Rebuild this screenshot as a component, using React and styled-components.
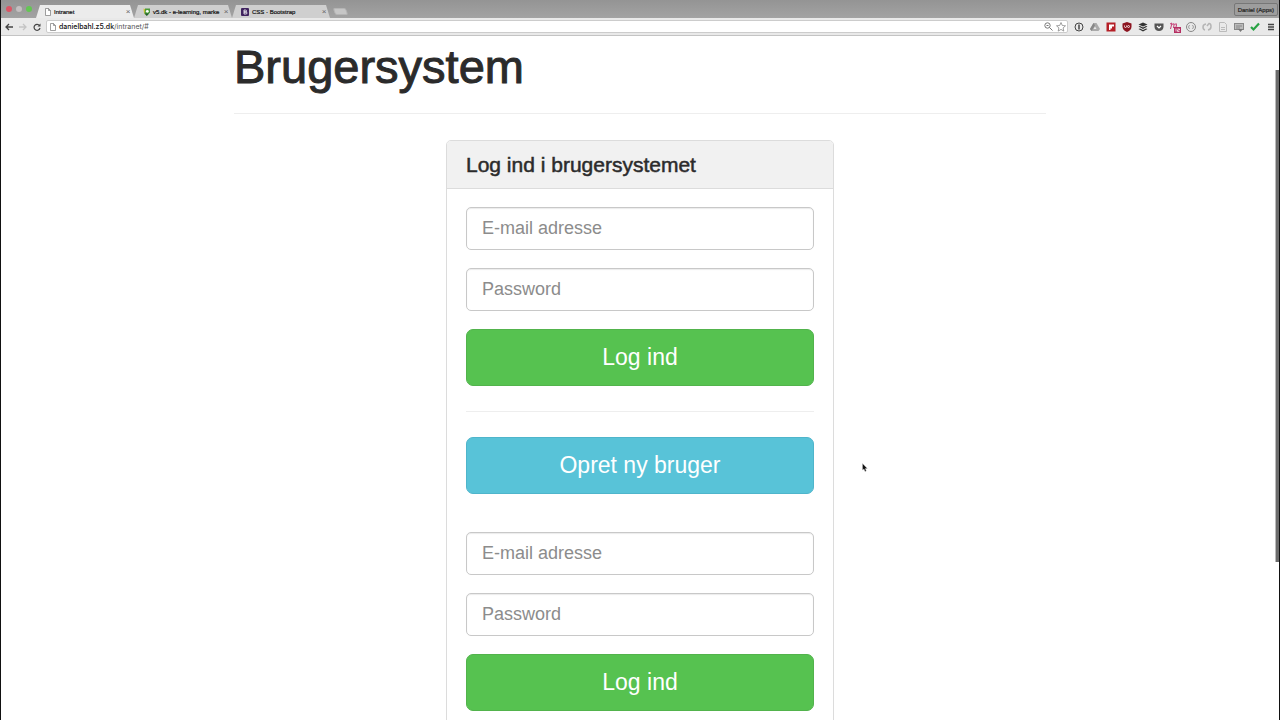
import React from 'react';
import styled, { createGlobalStyle } from 'styled-components';

const GlobalStyle = createGlobalStyle`
  * {
    box-sizing: border-box;
  }
  body {
    margin: 0;
    background: #fff;
    color: #2b2b2b;
    font-family: "Liberation Sans", Arial, sans-serif;
  }
`;

const Window = styled.div`
  height: 100vh;
  display: flex;
  flex-direction: column;
  overflow: hidden;
  border-left: 1px solid #111;
  border-right: 1px solid #111;
  background: #fff;
`;

const TabStrip = styled.div`
  height: 18px;
  flex: none;
  display: flex;
  align-items: flex-end;
  padding-left: 5px;
  background: linear-gradient(#949494, #a3a3a3);
`;

const Lights = styled.div`
  display: flex;
  gap: 4px;
  align-self: center;
  margin-right: 4px;
`;

const Light = styled.span`
  width: 6px;
  height: 6px;
  border-radius: 50%;
  background: ${props => props.$color};
`;

const Tab = styled.div`
  width: 98px;
  height: 13px;
  display: flex;
  align-items: center;
  gap: 3px;
  padding: 0 3px 0 9px;
  font-size: 6px;
  color: #111;
  background: ${props => (props.$active ? '#ececec' : '#cfcfcf')};
  clip-path: polygon(4px 0, calc(100% - 4px) 0, 100% 100%, 0 100%);

  & > svg {
    flex: none;
  }
`;

const TabTitle = styled.span`
  flex: 1;
  white-space: nowrap;
  line-height: 8px;
  -webkit-text-stroke: 0.2px;
`;

const TabClose = styled.button`
  width: 6px;
  height: 8px;
  padding: 0;
  border: 0;
  background: none;
  color: #666;
  font-size: 8px;
  line-height: 8px;
`;

const NewTab = styled.button`
  width: 13px;
  height: 7px;
  margin: 0 0 3px 4px;
  padding: 0;
  border: 1px solid #b5b5b5;
  border-radius: 2px;
  background: #c6c6c6;
  transform: skewX(20deg);
`;

const Profile = styled.button`
  height: 13px;
  margin: 0 1px 2px auto;
  padding: 0 3px;
  border: 1px solid #777;
  border-radius: 2px;
  background: #9d9d9d;
  color: #222;
  font: 6px "Liberation Sans", Arial, sans-serif;
  -webkit-text-stroke: 0.2px;
`;

const Toolbar = styled.div`
  height: 18px;
  flex: none;
  display: flex;
  align-items: center;
  padding: 0 2px 0 1px;
  background: #e9e9e9;
  border-bottom: 1px solid #c4c4c4;
`;

const NavButton = styled.button`
  width: 14px;
  height: 12px;
  display: flex;
  align-items: center;
  justify-content: center;
  padding: 0;
  border: 0;
  background: none;
`;

const AddressBar = styled.div`
  flex: 1;
  height: 13px;
  display: flex;
  align-items: center;
  gap: 3px;
  margin-left: 2px;
  padding: 0 1px 0 3px;
  border: 1px solid #ccc;
  border-radius: 2px;
  background: #fff;
`;

const Url = styled.div`
  flex: 1;
  font-family: Inter, "Liberation Sans", sans-serif;
  font-size: 7px;
  line-height: 9px;
  color: #555;

  & > strong {
    color: #111;
    font-weight: 500;
  }
`;

const Extensions = styled.div`
  display: flex;
  gap: 4px;
  margin-left: 5px;
`;

const Extension = styled.button`
  width: 12px;
  height: 12px;
  display: flex;
  align-items: center;
  justify-content: center;
  padding: 0;
  border: 0;
  background: none;
`;

const Viewport = styled.main`
  flex: 1;
  min-height: 0;
  position: relative;
  overflow: hidden;
`;

const Scrollbar = styled.div`
  position: absolute;
  top: 34px;
  right: 0;
  width: 4px;
  height: 72%;
  background: #6b6b6b;
  border-left: 1px solid #bbb;
`;

const Cursor = styled.svg`
  position: absolute;
  left: 861px;
  top: 427px;
`;

const Container = styled.div`
  max-width: 812px;
  margin: 0 auto;
`;

const PageHeader = styled.header`
  padding: 3px 0 18px;
  border-bottom: 1px solid #eee;
  margin-bottom: 26px;
`;

const Title = styled.h1`
  margin: 0;
  font-size: 47px;
  line-height: 56px;
  font-weight: normal;
  -webkit-text-stroke: 1px;
`;

const Panel = styled.section`
  max-width: 388px;
  margin: 0 auto;
  border: 1px solid #dcdcdc;
  border-radius: 5px;
`;

const PanelHeading = styled.div`
  padding: 12px 19px;
  background: #f1f1f1;
  border-bottom: 1px solid #dcdcdc;
  border-radius: 4px 4px 0 0;
`;

const PanelTitle = styled.h3`
  margin: 0;
  font-size: 21px;
  line-height: 23px;
  font-weight: normal;
  -webkit-text-stroke: 0.5px;
`;

const PanelBody = styled.div`
  padding: 18px 19px;
`;

const Form = styled.form`
  display: flex;
  flex-direction: column;
  gap: 18px;
`;

const Input = styled.input`
  width: 100%;
  height: 43px;
  padding: 0 15px;
  border: 1px solid #c8c8c8;
  border-radius: 5px;
  background: #fff;
  box-shadow: inset 0 1px 1px rgba(0, 0, 0, 0.08);
  color: #555;
  font: 18px "Liberation Sans", Arial, sans-serif;

  &::placeholder {
    color: #8c8c8c;
    opacity: 1;
  }
`;

const Button = styled.button`
  width: 100%;
  height: 57px;
  padding: 0;
  border: 1px solid ${props => (props.$info ? '#4fb5cb' : '#52b34c')};
  border-radius: 7px;
  background: ${props => (props.$info ? '#58c3d8' : '#56c250')};
  color: #fff;
  font: 23px "Liberation Sans", Arial, sans-serif;
`;

const Divider = styled.hr`
  margin: 25px 0;
  border: 0;
  border-top: 1px solid #eee;
`;

const SignUp = styled.div`
  margin-bottom: 38px;
`;

const PageIcon = () => (
  <svg width="6" height="8" viewBox="0 0 6 8" fill="#fff" stroke="#777" strokeWidth="0.7">
    <path d="M0.5 0.5h3l2 2v5h-5zM3.5 0.5v2h2" />
  </svg>
);

const LogoIcon = () => (
  <svg width="7" height="8" viewBox="0 0 7 8">
    <path d="M0.500 0.500L4 2 3 7 1 5z" fill="#d9c62d" />
    <path d="M2 0.500h5v4L4.500 7.500 1.500 6z" fill="#4c9a3c" />
    <circle cx="4.300" cy="3.300" r="1.400" fill="#fff" />
    <path d="M2 5.500h4L3.500 8z" fill="#225a2b" />
  </svg>
);

const BootstrapIcon = () => (
  <svg width="8" height="8" viewBox="0 0 8 8">
    <rect width="8" height="8" rx="1" fill="#40245f" />
    <path d="M3 2h1.500q1 0 1 1t-1 1H3zM3 4h2q1 0 1 1t-1 1H3z" fill="none" stroke="#fff" strokeWidth="0.8" />
  </svg>
);

const tabs = [
  { title: 'Intranet', Icon: PageIcon, active: true },
  { title: 'v5.dk - e-learning, marke', Icon: LogoIcon },
  { title: 'CSS · Bootstrap', Icon: BootstrapIcon }
];

const extensions = [
  {
    name: '1Password',
    icon: (
      <g fill="none" stroke="#444">
        <circle cx="6" cy="6" r="4" />
        <path d="M6 3.500v5" strokeWidth="1.500" />
      </g>
    )
  },
  {
    name: 'Drive',
    icon: (
      <g>
        <path d="M4.500 2h3L11 8 9.500 10h-7L1 8z" fill="#aaa" />
        <path d="M4.500 2L1 8l1.500 2L6 4.500z" fill="#888" />
        <path d="M6 5.500L4.500 8h3z" fill="#e9e9e9" />
      </g>
    )
  },
  {
    name: 'Flipboard',
    icon: (
      <g>
        <rect x="1.500" y="1.500" width="9" height="9" fill="#b51f27" />
        <path d="M4 3.500h5v2H7v2H5.500V9H4z" fill="#fff" />
      </g>
    )
  },
  {
    name: 'uBlock',
    icon: (
      <g>
        <path d="M6 1l4.500 1.500v3Q10.500 9 6 11 1.500 9 1.500 5.500v-3z" fill="#8c1420" />
        <path d="M3.500 4.500v1q0 1 1 1t1-1v-1" fill="none" stroke="#fff" strokeWidth="0.8" />
        <circle cx="7.500" cy="5.500" r="1" fill="none" stroke="#fff" strokeWidth="0.8" />
      </g>
    )
  },
  {
    name: 'Buffer',
    icon: (
      <g fill="#333">
        <path d="M6 1.500l4.500 2L6 5.500l-4.500-2z" />
        <path d="M1.500 5.500L3 5l3 1.500L9 5l1.500 0.500L6 8z" />
        <path d="M1.500 8L3 7.500 6 9l3-1.500 1.500 0.500L6 10.500z" />
      </g>
    )
  },
  {
    name: 'Pocket',
    icon: (
      <g>
        <path d="M1.500 2.500h9V6Q10 10 6 10T1.500 6z" fill="#555" />
        <path d="M4 5l2 2 2-2" fill="none" stroke="#fff" strokeWidth="1.200" />
      </g>
    )
  },
  {
    name: 'Notes',
    icon: (
      <g>
        <path d="M1 3l2-1-1.500 6M3.500 4q2-3 1.500 0L4.500 7M5.500 4q2-3 2 0L7 6" fill="none" stroke="#c43a72" />
        <rect x="5" y="6" width="7" height="6" fill="#b52e62" />
        <path d="M7 7.500v3M8.500 8h2v1h-2v1.500h2" fill="none" stroke="#fff" strokeWidth="0.700" />
      </g>
    )
  },
  {
    name: 'JSON viewer',
    icon: (
      <g fill="none" stroke="#888">
        <circle cx="6" cy="6" r="4.500" />
        <path d="M4.500 4L3.500 6l1 2M7.500 4l1 2-1 2" strokeWidth="0.8" />
      </g>
    )
  },
  {
    name: 'Link',
    icon: (
      <g fill="none" stroke="#b5b5b5" strokeWidth="1.500">
        <path d="M5 3Q2 3.500 2 6t2 3M7 9q3-0.500 3-3.500T8 2.500L6 5" />
      </g>
    )
  },
  {
    name: 'Page',
    icon: (
      <g fill="none" stroke="#bbb">
        <path d="M2.500 1.500h5l2 2v7h-7zM4 6.500h4M4 8.500h4" />
      </g>
    )
  },
  {
    name: 'Cast',
    icon: (
      <g>
        <rect x="1.500" y="2.500" width="9" height="6" fill="#bbb" stroke="#888" />
        <path d="M3 5h6M3 7h4" stroke="#777" strokeWidth="0.700" />
        <path d="M5 8h5l-2.500 3z" fill="#777" />
      </g>
    )
  },
  {
    name: 'Check',
    icon: <path d="M2 6l2.500 2.500L10 2.500" fill="none" stroke="#27a243" strokeWidth="2.200" />
  },
  {
    name: 'Menu',
    icon: <path d="M3 3.500h6M3 6h6M3 8.500h6" stroke="#444" strokeWidth="1.300" />
  }
];

const Browser = () => (
  <>
    <TabStrip>
      <Lights>
        <Light $color="#dc5465" />
        <Light $color="#c4bfc1" />
        <Light $color="#63c653" />
      </Lights>
      {tabs.map(({ title, Icon, active }) => (
        <Tab key={title} $active={active}>
          <Icon />
          <TabTitle>{title}</TabTitle>
          <TabClose aria-label="Luk fane">×</TabClose>
        </Tab>
      ))}
      <NewTab aria-label="Ny fane" />
      <Profile>Daniel (Apps)</Profile>
    </TabStrip>
    <Toolbar>
      <NavButton aria-label="Tilbage">
        <svg width="8" height="8" viewBox="0 0 8 8" fill="none" stroke="#444" strokeWidth="1.300">
          <path d="M8 4H1M4 1L1 4l3 3" />
        </svg>
      </NavButton>
      <NavButton aria-label="Frem">
        <svg width="8" height="8" viewBox="0 0 8 8" fill="none" stroke="#c4c4c4" strokeWidth="1.300">
          <path d="M0 4h7M4 1l3 3-3 3" />
        </svg>
      </NavButton>
      <NavButton aria-label="Genindlæs">
        <svg width="8" height="8" viewBox="0 0 8 8">
          <path d="M6.500 2.500A3 3 0 1 0 7 5" fill="none" stroke="#444" strokeWidth="1.200" />
          <path d="M7.500 0.500v3h-3z" fill="#444" />
        </svg>
      </NavButton>
      <AddressBar>
        <PageIcon />
        <Url>
          <strong>danielbahl.z5.dk</strong>/intranet/#
        </Url>
        <svg width="9" height="9" viewBox="0 0 9 9" fill="none" stroke="#777">
          <circle cx="3.500" cy="3.500" r="2.700" />
          <path d="M5.500 5.500l3 3M2.500 3.500h2" />
        </svg>
        <svg width="10" height="10" viewBox="0 0 10 10" fill="none" stroke="#888" strokeWidth="0.8">
          <path d="M5 0.500l1.300 3 3.200 0.300-2.400 2.100 0.700 3.200L5 7.400 2.200 9.100l0.700-3.200L0.500 3.800l3.200-0.300z" />
        </svg>
      </AddressBar>
      <Extensions>
        {extensions.map(({ name, icon }) => (
          <Extension key={name} aria-label={name}>
            <svg width="12" height="12" viewBox="0 0 12 12">
              {icon}
            </svg>
          </Extension>
        ))}
      </Extensions>
    </Toolbar>
  </>
);

const LoginForm = () => (
  <Form onSubmit={e => e.preventDefault()}>
    <Input type="email" placeholder="E-mail adresse" aria-label="E-mail adresse" />
    <Input type="password" placeholder="Password" aria-label="Password" />
    <Button type="submit">Log ind</Button>
  </Form>
);

export default () => {
  return (
    <Window>
      <GlobalStyle />
      <Browser />
      <Viewport>
        <Container>
          <PageHeader>
            <Title>Brugersystem</Title>
          </PageHeader>
          <Panel>
            <PanelHeading>
              <PanelTitle>Log ind i brugersystemet</PanelTitle>
            </PanelHeading>
            <PanelBody>
              <LoginForm />
              <Divider />
              <SignUp>
                <Button type="button" $info>
                  Opret ny bruger
                </Button>
              </SignUp>
              <LoginForm />
            </PanelBody>
          </Panel>
        </Container>
        <Scrollbar />
        <Cursor width="6" height="9" viewBox="0 0 6 9">
          <path d="M0.500 0.500v6.500l1.500-1 1 2.500 1.300-0.500-1-2.500h2z" fill="#111" stroke="#ccc" strokeWidth="0.400" />
        </Cursor>
      </Viewport>
    </Window>
  );
};
